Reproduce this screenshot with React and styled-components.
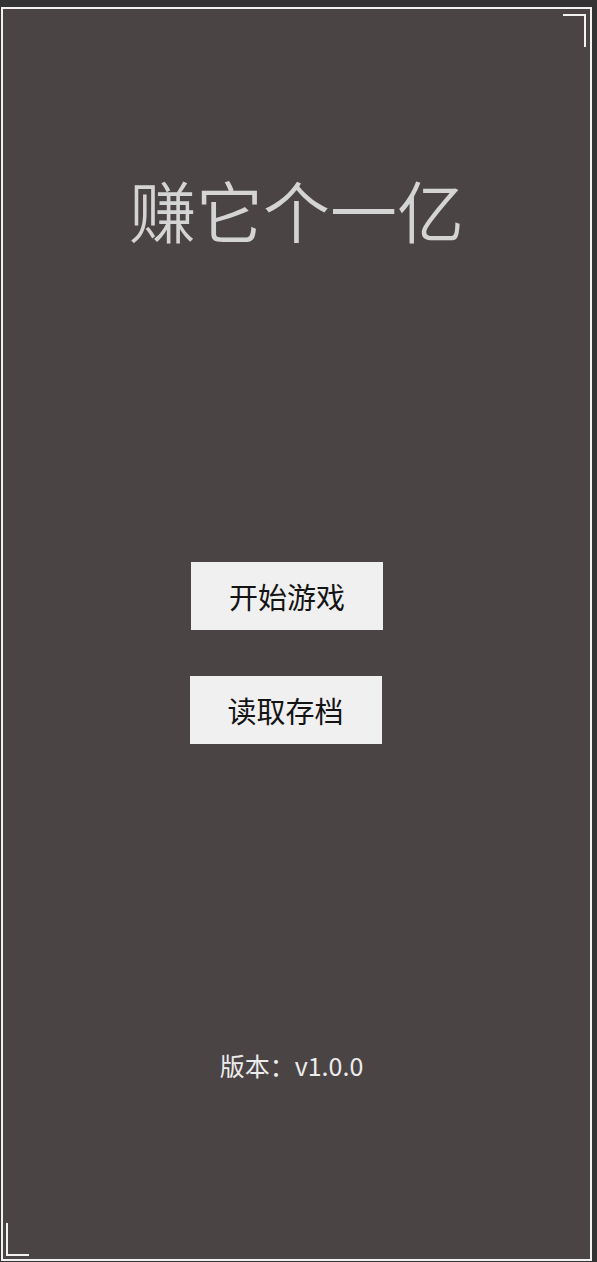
import React from 'react';
import styled, { createGlobalStyle } from 'styled-components';

const GlobalStyle = createGlobalStyle`
  html, body {
    margin: 0;
    padding: 0;
    background: #333333;
  }
  body {
    font-family: "Noto Sans CJK SC", "Noto Sans", sans-serif;
  }
`;

const Screen = styled.div`
  width: 597px;
  height: 1262px;
  padding: 7px 0 0 1px;
  box-sizing: border-box;
  overflow: hidden;
`;

const Frame = styled.div`
  position: relative;
  width: 591px;
  height: 1254px;
  box-sizing: border-box;
  border: 2px solid #f2f2f2;
  background: #4b4445;
  display: flex;
  flex-direction: column;
  align-items: center;
`;

const Corner = styled.span`
  position: absolute;
  width: 21px;
  height: 31px;
  border-color: #f2f2f2;
  border-style: solid;
  border-width: 0;
  ${({ $pos }) =>
    $pos === 'top-right'
      ? `top: 5px; right: 4px; border-top-width: 2px; border-right-width: 2px;`
      : `bottom: 3px; left: 3px; border-bottom-width: 2px; border-left-width: 2px;`}
`;

const Title = styled.h1`
  margin: 166px 0 0;
  font-size: 67px;
  line-height: 1;
  font-weight: 350;
  color: #d4d4d4;
  letter-spacing: 0;
`;

const Menu = styled.div`
  margin-top: 320px;
  display: flex;
  flex-direction: column;
  align-items: center;
  gap: 46px;
  margin-right: 22px;
`;

const MenuButton = styled.button`
  width: 192px;
  height: 68px;
  border: none;
  background: #f0f0f0;
  color: #141414;
  font-family: "Noto Sans CJK SC", "Noto Sans", sans-serif;
  font-size: 29px;
  font-weight: 400;
  padding: 0;
  cursor: pointer;
  margin-left: ${({ $shift }) => $shift || 0}px;
`;

const Version = styled.div`
  margin-top: 309px;
  margin-right: 10px;
  font-size: 25px;
  line-height: 1;
  color: #ececec;
`;

export default function App() {
  return (
    <>
      <GlobalStyle />
      <Screen>
        <Frame>
          <Corner $pos="top-right" />
          <Corner $pos="bottom-left" />
          <Title>赚它个一亿</Title>
          <Menu>
            <MenuButton $shift={3}>开始游戏</MenuButton>
            <MenuButton>读取存档</MenuButton>
          </Menu>
          <Version>版本：v1.0.0</Version>
        </Frame>
      </Screen>
    </>
  );
}
